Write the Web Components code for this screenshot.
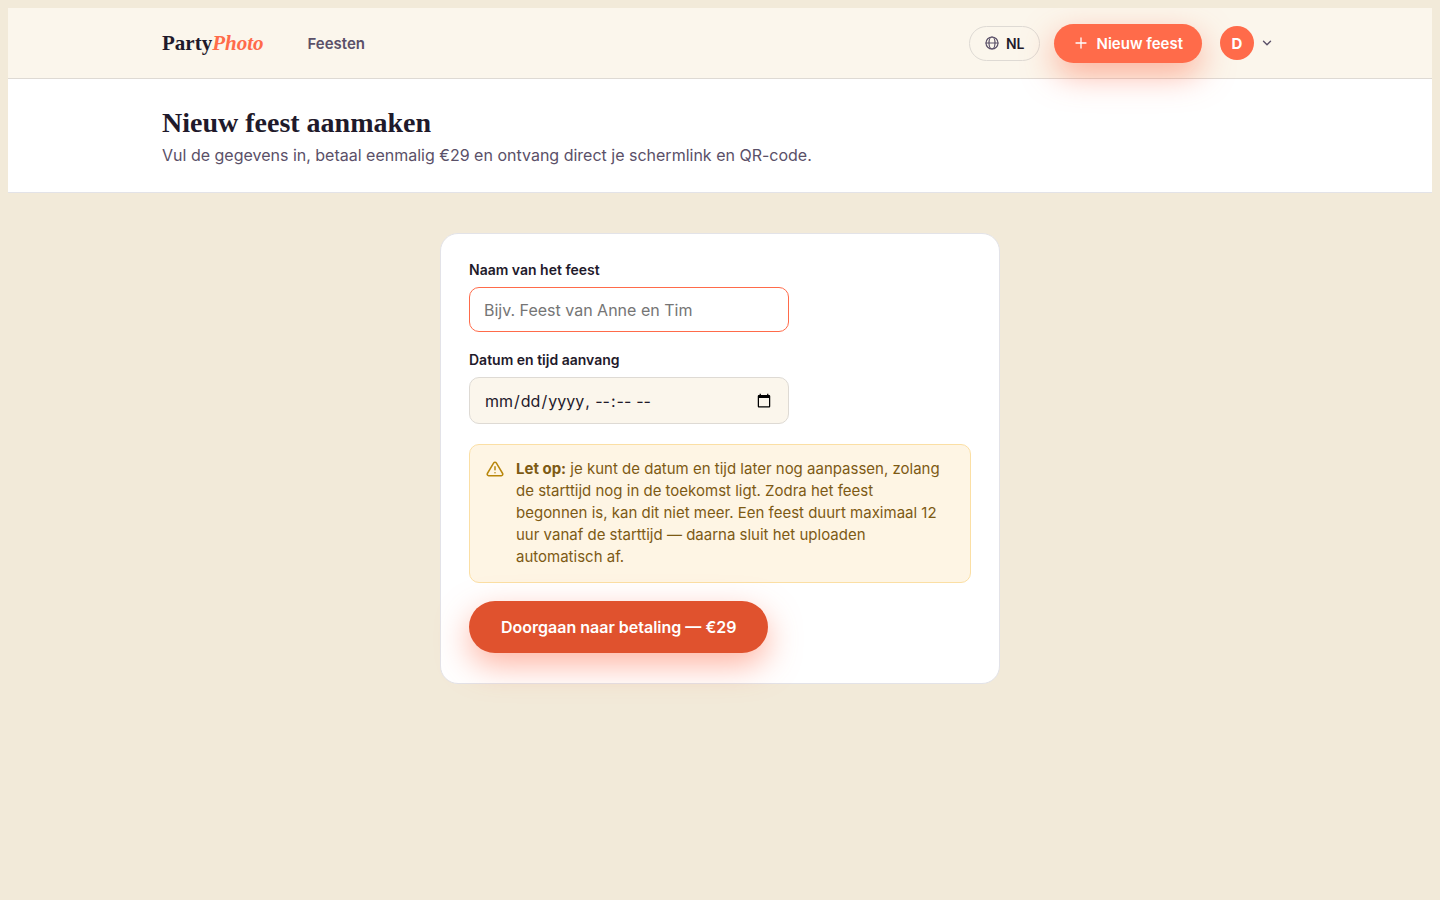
<!DOCTYPE html>
<html lang="nl">
<head>
<meta charset="utf-8">
<meta name="viewport" content="width=device-width, initial-scale=1">
<title>PartyPhoto</title>
<style>
  :root {
    --font: Inter, "Open Sans", "Liberation Sans", sans-serif;
    --font-display: "Liberation Serif", serif;
    --ink: #1f1a2b;
    --ink-soft: #5a5068;
    --coral: #ff6b4a;
    --coral-dark: #e0522e;
    --cream: #fbf6ec;
    --sand: #f2ead9;
    --line: #dedad4;
    --shadow: 0 12px 32px rgba(255, 107, 74, 0.5);
  }
  body {
    background: var(--sand);
    color: var(--ink);
    font-family: var(--font);
    font-size: 15px;
  }
</style>
</head>
<body>
<party-header>
  <a slot="nav" href="#feesten">Feesten</a>
</party-header>
<party-hero>
  <span slot="title">Nieuw feest aanmaken</span>
  Vul de gegevens in, betaal eenmalig €29 en ontvang direct je schermlink en QR-code.
</party-hero>
<party-form>
  <party-field label="Naam van het feest" type="text" placeholder="Bijv. Feest van Anne en Tim" active></party-field>
  <party-field label="Datum en tijd aanvang" type="datetime-local"></party-field>
  <party-notice><b>Let op:</b> je kunt de datum en tijd later nog aanpassen, zolang de starttijd nog in de toekomst ligt. Zodra het feest begonnen is, kan dit niet meer. Een feest duurt maximaal 12 uur vanaf de starttijd — daarna sluit het uploaden automatisch af.</party-notice>
  <party-button slot="action" size="large">Doorgaan naar betaling — €29</party-button>
</party-form>

<script>
class PartyButton extends HTMLElement {
  constructor() {
    super();
    this.attachShadow({ mode: 'open' });
  }

  connectedCallback() {
    this.shadowRoot.innerHTML = `
      <style>
        :host {
          display: inline-flex;
        }
        button {
          display: inline-flex;
          align-items: center;
          gap: 8px;
          height: 39px;
          padding: 0 19px;
          border: 0;
          border-radius: 26px;
          background: var(--coral);
          box-shadow: var(--shadow);
          color: #fff;
          font-family: inherit;
          font-size: 15px;
          font-weight: 600;
          white-space: nowrap;
          cursor: pointer;
        }
        :host([size="large"]) button {
          height: 52px;
          padding: 0 32px;
          background: var(--coral-dark);
          font-size: 16px;
        }
      </style>
      <button type="button"><slot name="icon"></slot><slot></slot></button>
    `;
    // no gap for buttons without an icon
    if (!this.querySelector('[slot="icon"]')) {
      this.shadowRoot.querySelector('slot[name="icon"]').remove();
    }
  }
}

class PartyHeader extends HTMLElement {
  constructor() {
    super();
    this.attachShadow({ mode: 'open' });
  }

  connectedCallback() {
    this.shadowRoot.innerHTML = `
      <style>
        :host {
          display: block;
          position: relative;
          z-index: 1;
          background: var(--cream);
          border-bottom: 1px solid var(--line);
        }
        header {
          display: flex;
          align-items: center;
          box-sizing: border-box;
          max-width: 1180px;
          height: 70px;
          margin: 0 auto;
          padding: 0 32px;
        }
        .logo {
          margin-right: 44px;
          color: var(--ink);
          font-family: var(--font-display);
          font-size: 21px;
          font-weight: 700;
          text-decoration: none;
        }
        .logo em {
          color: var(--coral);
        }
        nav {
          flex: 1;
        }
        ::slotted(a) {
          color: var(--ink-soft);
          font-weight: 600;
          text-decoration: none;
        }
        .lang, .user {
          display: flex;
          align-items: center;
          font-family: inherit;
          cursor: pointer;
        }
        .lang {
          gap: 6px;
          height: 35px;
          margin-right: 14px;
          padding: 0 14px;
          background: transparent;
          border: 1px solid var(--line);
          border-radius: 18px;
          color: var(--ink);
          font-size: 14px;
          font-weight: 600;
        }
        .lang svg {
          color: var(--ink-soft);
        }
        .user {
          gap: 6px;
          margin-left: 18px;
          padding: 0 4px 0 0;
          background: none;
          border: 0;
          color: var(--ink-soft);
        }
        .avatar {
          display: grid;
          place-items: center;
          width: 34px;
          height: 34px;
          border-radius: 50%;
          background: var(--coral);
          color: #fff;
          font-size: 15px;
          font-weight: 700;
        }
        svg {
          display: block;
          fill: none;
          stroke: currentColor;
          stroke-linecap: round;
          stroke-linejoin: round;
        }
      </style>
      <header>
        <a class="logo" href="#">Party<em>Photo</em></a>
        <nav><slot name="nav"></slot></nav>
        <button class="lang" type="button">
          <svg width="16" height="16" viewBox="0 0 16 16" stroke-width="1.200">
            <circle cx="8" cy="8" r="6"/>
            <path d="M2 8h12"/>
            <ellipse cx="8" cy="8" rx="3" ry="6"/>
          </svg>
          NL
        </button>
        <party-button>
          <svg slot="icon" width="16" height="16" viewBox="0 0 16 16" stroke-width="1.300"><path d="M8 3v10M3 8h10"/></svg>
          Nieuw feest
        </party-button>
        <button class="user" type="button" aria-label="Account">
          <span class="avatar">D</span>
          <svg width="14" height="14" viewBox="0 0 24 24" stroke-width="2.400"><path d="m6 9 6 6 6-6"/></svg>
        </button>
      </header>
    `;
  }
}

class PartyHero extends HTMLElement {
  constructor() {
    super();
    this.attachShadow({ mode: 'open' });
  }

  connectedCallback() {
    this.shadowRoot.innerHTML = `
      <style>
        :host {
          display: block;
          background: #fff;
          border-bottom: 1px solid #e3e3e8;
        }
        section {
          box-sizing: border-box;
          max-width: 1180px;
          margin: 0 auto;
          padding: 28px 32px 25px;
        }
        h1 {
          margin: 0 0 4px;
          font-family: var(--font-display);
          font-size: 28px;
          font-weight: 700;
          line-height: 32px;
        }
        p {
          margin: 0;
          color: var(--ink-soft);
          font-size: 16px;
          line-height: 24px;
        }
      </style>
      <section>
        <h1><slot name="title"></slot></h1>
        <p><slot></slot></p>
      </section>
    `;
  }
}

class PartyForm extends HTMLElement {
  constructor() {
    super();
    this.attachShadow({ mode: 'open' });
  }

  connectedCallback() {
    this.shadowRoot.innerHTML = `
      <style>
        :host {
          display: block;
          padding: 40px 32px;
        }
        form {
          display: flex;
          flex-direction: column;
          gap: 20px;
          box-sizing: border-box;
          max-width: 560px;
          margin: 0 auto;
          padding: 28px 28px 30px;
          background: #fff;
          border: 1px solid #e3e3e8;
          border-radius: 18px;
        }
        .action {
          display: flex;
          margin-top: -2px;
        }
      </style>
      <form>
        <slot></slot>
        <div class="action"><slot name="action"></slot></div>
      </form>
    `;
  }
}

class PartyField extends HTMLElement {
  constructor() {
    super();
    this.attachShadow({ mode: 'open' });
  }

  connectedCallback() {
    const type = this.getAttribute('type');
    const placeholder = this.getAttribute('placeholder') || '';
    this.shadowRoot.innerHTML = `
      <style>
        :host {
          display: block;
        }
        label {
          display: block;
          margin-bottom: 10px;
          font-size: 14px;
          font-weight: 600;
          line-height: 15px;
        }
        input {
          display: block;
          box-sizing: border-box;
          width: 100%;
          max-width: 320px;
          height: 45px;
          padding: 0 14px;
          background: var(--cream);
          border: 1px solid var(--line);
          border-radius: 10px;
          outline: none;
          color: var(--ink);
          font-family: inherit;
          font-size: 16px;
        }
        input[type="datetime-local"] {
          height: 47px;
        }
        input:focus,
        :host([active]) input {
          background: #fff;
          border-color: var(--coral);
        }
        input::placeholder {
          color: #757575;
        }
      </style>
      <label for="input">${this.getAttribute('label')}</label>
      <input id="input" type="${type}" placeholder="${placeholder}">
    `;
  }
}

class PartyNotice extends HTMLElement {
  constructor() {
    super();
    this.attachShadow({ mode: 'open' });
  }

  connectedCallback() {
    this.shadowRoot.innerHTML = `
      <style>
        :host {
          display: flex;
          gap: 12px;
          padding: 13px 24px 14px 16px;
          background: #fef5e4;
          border: 1px solid #fbdfa4;
          border-radius: 10px;
          color: #7d5a14;
          font-size: 15px;
          line-height: 22px;
        }
        svg {
          flex: none;
          margin-top: 2px;
          fill: none;
          stroke: #b8860b;
          stroke-linecap: round;
          stroke-linejoin: round;
        }
        p {
          margin: 0;
        }
      </style>
      <svg width="18" height="18" viewBox="0 0 24 24" stroke-width="2">
        <path d="M10.290 3.860 1.820 18a2 2 0 0 0 1.710 3h16.940a2 2 0 0 0 1.710-3L13.710 3.860a2 2 0 0 0-3.420 0z"/>
        <path d="M12 9v4M12 17h.01"/>
      </svg>
      <p><slot></slot></p>
    `;
  }
}

customElements.define('party-button', PartyButton);
customElements.define('party-header', PartyHeader);
customElements.define('party-hero', PartyHero);
customElements.define('party-form', PartyForm);
customElements.define('party-field', PartyField);
customElements.define('party-notice', PartyNotice);
</script>
</body>
</html>
